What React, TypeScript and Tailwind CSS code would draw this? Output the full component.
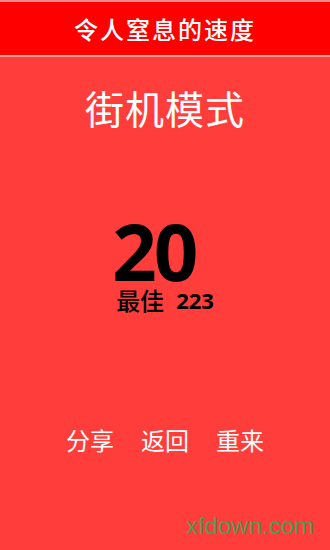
import React from "react";

const cjk = { fontFamily: '"Noto Sans CJK SC", "Noto Sans", sans-serif' };
const num = { fontFamily: '"Open Sans", "Liberation Sans", sans-serif' };

export default function App() {
  return (
    <div className="w-[330px] h-[550px] bg-[#ff3d3b] flex flex-col overflow-hidden" style={cjk}>
      <div className="h-[2px] bg-[#f08a8a]" />
      <div className="h-[53px] bg-[#ff0000] flex items-center justify-center">
        <h1 className="text-white text-[24px] font-medium tracking-[2px] leading-none">令人窒息的速度</h1>
      </div>
      <div className="h-[2px] bg-[#ff9c9c]" />

      <div className="flex flex-col items-center pt-[31px]">
        <h2 className="text-white text-[39px] leading-none tracking-[1px]">街机模式</h2>
      </div>

      <div className="flex justify-center mt-[91px]">
        <div className="flex flex-col items-start">
          <div className="text-black text-[78px] font-bold leading-[66px] tracking-[-3px] -ml-[4px]" style={num}>
            20
          </div>
          <div className="flex items-center gap-[12px] mt-[4px] text-black leading-none">
            <span className="text-[24px] font-medium">最佳</span>
            <span className="text-[22px] font-bold" style={num}>
              223
            </span>
          </div>
        </div>
      </div>

      <div className="flex justify-center gap-[27px] mt-[116px] text-white text-[24px] leading-none">
        <span>分享</span>
        <span>返回</span>
        <span>重来</span>
      </div>

      <div className="flex-1 flex items-end justify-end pr-[16px] pb-[12px]">
        <span className="text-[24px] text-[#4f9a52] leading-none" style={{ fontFamily: '"Liberation Sans", Arial, sans-serif' }}>
          xfdown.com
        </span>
      </div>
    </div>
  );
}
